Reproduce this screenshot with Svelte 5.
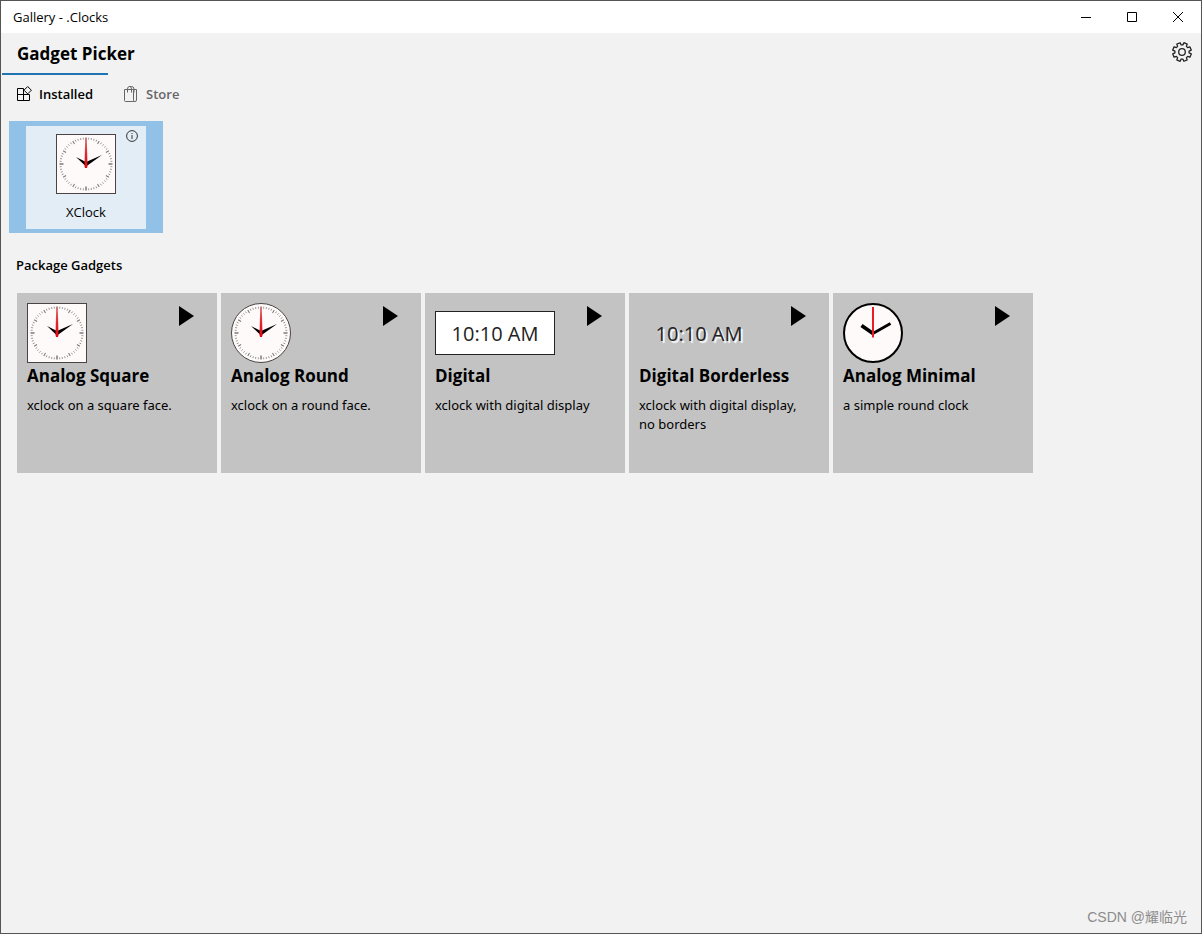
<script>
  const gadgets = [
    { name: 'Analog Square', face: 'square', description: 'xclock on a square face.' },
    { name: 'Analog Round', face: 'round', description: 'xclock on a round face.' },
    { name: 'Digital', face: 'digital', description: 'xclock with digital display' },
    { name: 'Digital Borderless', face: 'borderless', description: 'xclock with digital display, no borders' },
    { name: 'Analog Minimal', face: 'minimal', description: 'a simple round clock' }
  ]

  const ticks = Array.from({ length: 60 }, (_, i) => i)
  let tab = $state('installed')
</script>

<svelte:head><title>Gallery - .Clocks</title></svelte:head>

{#snippet clock(face)}
  <svg class="clock" viewBox="0 0 60 60" aria-hidden="true">
    {#if face === 'minimal'}
      <circle cx="30" cy="30" r="29" fill="#fffafa" stroke="#000" stroke-width="2" />
      <path d="M30 30.5 18.5 22.5" stroke="#000" stroke-width="3.8" />
      <path d="M29 31 47.5 20.5" stroke="#000" stroke-width="2.8" />
      <path d="M30 4v30.5" stroke="#ed1c24" stroke-width="2" />
    {:else}
      {#if face === 'square'}
        <rect x="0.5" y="0.5" width="59" height="59" fill="#fffafa" stroke="#4a4444" />
      {:else}
        <circle cx="30" cy="30" r="29.5" fill="#fffafa" stroke="#4a4444" />
      {/if}
      {#each ticks as i}
        {#if i % 15 === 0}
          <path d="M30 3.5v4" stroke="#999" stroke-width="2" transform="rotate({i * 6} 30 30)" />
        {:else if i % 5 === 0}
          <path d="M30 3.5v3.5" stroke="#777" stroke-width="1" transform="rotate({i * 6} 30 30)" />
        {:else}
          <path d="M30 3.5v2" stroke="#888" stroke-width="0.8" transform="rotate({i * 6} 30 30)" />
        {/if}
      {/each}
      <path d="M20 23 30 28 46 21 30 32.5Z" fill="#000" />
      <path d="M29.200 4h1.600l.7 28-.5 2h-2l-.5-2Z" fill="url(#second-{face})" />
      <defs>
        <linearGradient id="second-{face}" x1="0" y1="0" x2="0" y2="1">
          <stop offset="0" stop-color="#d77" />
          <stop offset="0.5" stop-color="#dc2a2e" />
          <stop offset="1" stop-color="#e30613" />
        </linearGradient>
      </defs>
    {/if}
  </svg>
{/snippet}

<div class="window">
  <header class="titlebar">
    <span class="caption">Gallery - .Clocks</span>
    <div class="controls">
      <button aria-label="Minimize"><svg viewBox="0 0 12 12"><path d="M1 6.5h10" /></svg></button>
      <button aria-label="Maximize"><svg viewBox="0 0 12 12"><path d="M1.5 1.5h9v9h-9z" /></svg></button>
      <button aria-label="Close"><svg viewBox="0 0 12 12"><path d="M1 1l10 10M11 1 1 11" /></svg></button>
    </div>
  </header>

  <div class="heading">
    <h1>Gadget Picker</h1>
    <button class="settings" aria-label="Settings">
      <svg viewBox="0 0 20 20">
        <path d="M8.1 3.1 8.2.7 11.8.7 11.9 3.1 13.5 3.8 15.3 2.2 17.8 4.7 16.2 6.5 16.9 8.1 19.3 8.2 19.3 11.8 16.9 11.9 16.2 13.5 17.8 15.3 15.3 17.8 13.5 16.2 11.9 16.9 11.8 19.3 8.2 19.3 8.1 16.9 6.5 16.2 4.7 17.8 2.2 15.3 3.8 13.5 3.1 11.9.7 11.8.7 8.2 3.1 8.1 3.8 6.5 2.2 4.7 4.7 2.2 6.5 3.8Z" transform="rotate(22.5 10 10)" />
        <circle cx="10" cy="10" r="3.3" />
      </svg>
    </button>
  </div>

  <nav class="tabs">
    <button class:active={tab === 'installed'} onclick={() => tab = 'installed'}>
      <svg viewBox="0 0 16 16"><path d="M7.5 8.5v-6h-6v12h12v-6h-12M7.5 8.5v6M11.7.5 15.4 4.2 11.7 7.9 8 4.2Z" /></svg>
      Installed
    </button>
    <button class:active={tab === 'store'} onclick={() => tab = 'store'}>
      <svg viewBox="0 0 16 16"><path d="M1.5 3.5h8q1 0 1 1v10q0 1-1 1h-7q-1 0-1-1ZM9.5 3.5h4v10.500q0 1.500-1.500 1.500h-2.500M4.500 6.500V3q0-2.500 2-2.500t2 2.500v3.500M6.500.5h2q2.500 0 2.500 2.500v3.500" /></svg>
      Store
    </button>
  </nav>

  <main>
    <div class="installed">
      <div class="package">
        <button class="pick">
          {@render clock('square')}
          <span>XClock</span>
        </button>
        <button class="info" aria-label="About XClock">
          <svg viewBox="0 0 12 12"><circle cx="6" cy="6" r="5.4" /><path d="M6 5v4M6 3v1" /></svg>
        </button>
      </div>
    </div>

    <h2>Package Gadgets</h2>

    <div class="gadgets">
      {#each gadgets as gadget}
        <article class="card">
          <div class="preview">
            {#if gadget.face === 'digital' || gadget.face === 'borderless'}
              <div class="digital {gadget.face}">10:10 AM</div>
            {:else}
              {@render clock(gadget.face)}
            {/if}
            <button class="play" aria-label="Launch {gadget.name}">
              <svg viewBox="0 0 16 20"><path d="M0 0 15 10 0 20Z" /></svg>
            </button>
          </div>
          <h3>{gadget.name}</h3>
          <p>{gadget.description}</p>
        </article>
      {/each}
    </div>
  </main>

  <footer>CSDN @耀临光</footer>
</div>

<style>
  :global(body) { margin: 0; }
  .window { min-height: 100vh; box-sizing: border-box; display: flex; flex-direction: column; background: #f2f2f2; border: 1px solid #555; color: #000; font-family: 'Open Sans', 'Noto Sans', 'Noto Sans CJK SC', sans-serif; font-size: 13px; }
  h1, h2, h3, p { margin: 0; }
  button { background: none; border: none; padding: 0; color: inherit; font: inherit; cursor: pointer; }
  svg { display: block; fill: none; stroke: currentColor; }
  .titlebar { display: flex; justify-content: space-between; height: 32px; background: #fff; }
  .caption { padding-left: 12px; line-height: 32px; }
  .controls { display: flex; }
  .controls button { display: flex; align-items: center; justify-content: center; width: 46px; }
  .controls svg { width: 12px; height: 12px; }
  .heading { display: flex; align-items: flex-start; justify-content: space-between; height: 40px; padding: 0 9px 0 16px; }
  h1 { padding-top: 9px; font-size: 17px; line-height: 24px; font-weight: 700; }
  .settings { padding-top: 9px; }
  .settings svg { width: 20px; height: 20px; stroke: #222; stroke-width: 1.3; stroke-linejoin: round; }
  .tabs { display: flex; gap: 1px; padding-left: 1px; color: #666; }
  .tabs button { display: flex; align-items: center; gap: 7px; height: 40px; padding: 0 15px 0 14px; border-top: 2px solid transparent; font-weight: 600; }
  .tabs button.active { border-color: #1f74b1; color: #000; }
  .tabs svg { width: 16px; height: 16px; stroke-width: 1; }
  main { padding: 8px; }
  .installed { display: flex; }
  .package { position: relative; padding: 5px 17px 4px; background: #91c1e7; }
  .pick { display: flex; flex-direction: column; align-items: center; gap: 8px; width: 120px; padding: 8px 0 7px; background: #e3edf6; line-height: 20px; }
  .info { position: absolute; top: 9px; right: 25px; }
  .info svg { width: 12px; height: 12px; stroke: #333; }
  .clock { width: 60px; height: 60px; stroke: none; }
  h2 { padding: 22px 7px 18px; font-size: 13px; line-height: 20px; font-weight: 600; }
  .gadgets { display: flex; flex-wrap: wrap; gap: 4px; padding-left: 8px; }
  .card { box-sizing: border-box; width: 200px; min-height: 180px; padding: 10px; background: #c3c3c3; }
  .preview { display: flex; align-items: center; justify-content: space-between; height: 60px; padding-right: 12px; }
  .digital { box-sizing: border-box; width: 120px; height: 44px; border: 1px solid #222; background: #fff; color: #222; font-size: 20px; line-height: 44px; text-align: center; }
  .digital.borderless { border-color: transparent; background: none; text-shadow: 2px 2px 1px #fff; }
  .play { align-self: flex-start; margin-top: 3px; }
  .play svg { width: 16px; height: 20px; fill: #000; stroke: none; }
  h3 { font-size: 17px; line-height: 26px; font-weight: 700; white-space: nowrap; }
  p { margin-top: 7px; padding-right: 12px; line-height: 19px; font-family: 'Noto Sans', sans-serif; }
  footer { margin-top: auto; padding: 0 14px 6px; font-size: 14px; line-height: 20px; text-align: right; color: #8c8c8c; font-family: 'Liberation Sans', 'Noto Sans CJK SC', sans-serif; }
</style>
